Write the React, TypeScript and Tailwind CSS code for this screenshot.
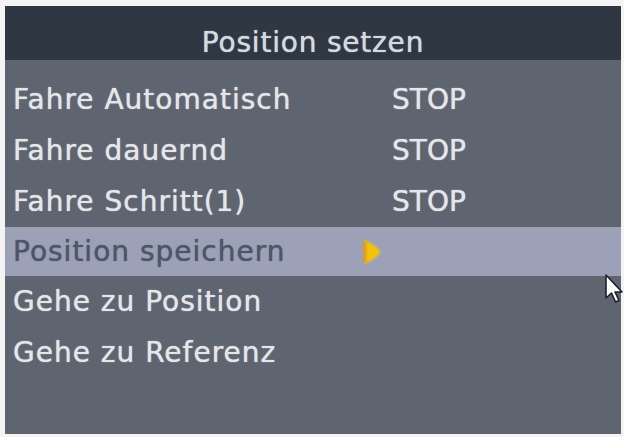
import React from 'react';

type Row = { label: string; value?: string; active?: boolean };

const rows: Row[] = [
  { label: 'Fahre Automatisch', value: 'STOP' },
  { label: 'Fahre dauernd', value: 'STOP' },
  { label: 'Fahre Schritt(1)', value: 'STOP' },
  { label: 'Position speichern', active: true },
  { label: 'Gehe zu Position' },
  { label: 'Gehe zu Referenz' },
];

function Pointer() {
  return (
    <svg width="22" height="32" viewBox="0 0 22 32" className="absolute left-[604px] top-[274px]">
      <path d="M2 1 L2 24 L7.5 19 L11.5 28 L15 26.5 L11 18 L18 18 Z" fill="#ffffff" stroke="#1c2028" strokeWidth="1.6" strokeLinejoin="round" />
    </svg>
  );
}

// yellow cursor blob in the selected row
function Marker() {
  return (
    <svg width="24" height="28" viewBox="0 0 24 28" className="blur-[1px]">
      <path d="M4 2 C 12 5, 20 11, 20 14 C 20 17, 12 23, 4 26 Z" fill="#f4c20d" />
      <path d="M5 4 L5 24" stroke="#e39a12" strokeWidth="3" />
    </svg>
  );
}

export default function App() {
  return (
    <div className="relative w-[624px] h-[437px] bg-[#f4f4f4] pt-[6px] pl-[5px] pr-[3px] pb-[3px] font-['DejaVu_Sans',sans-serif] overflow-hidden">
      <div className="flex flex-col h-full bg-[#5f6570]">
        <div className="h-[54px] bg-[#2f3842] flex items-center justify-center pt-[20px] text-[28px] leading-none tracking-[0.8px] text-[#d3dbe0] [text-shadow:0_0_1px_#d3dbe0]">
          Position setzen
        </div>
        <div className="flex flex-col pt-[14px]">
          {rows.map((r) => (
            <div
              key={r.label}
              className={
                r.active
                  ? 'h-[49px] flex items-center pl-[8px] bg-[#9ca1b8] text-[#4c5667] [text-shadow:0_0_1px_#4c5667]'
                  : 'h-[51px] flex items-center pl-[8px] text-[#e4e6e9] [text-shadow:0_0_1px_#e4e6e9]'
              }
            >
              <span className="w-[379px] text-[28px] leading-none tracking-[1px]">{r.label}</span>
              {r.value && <span className="text-[28px] leading-none">{r.value}</span>}
              {r.active && (
                <span className="-ml-[32px]">
                  <Marker />
                </span>
              )}
            </div>
          ))}
        </div>
      </div>
      <Pointer />
    </div>
  );
}
